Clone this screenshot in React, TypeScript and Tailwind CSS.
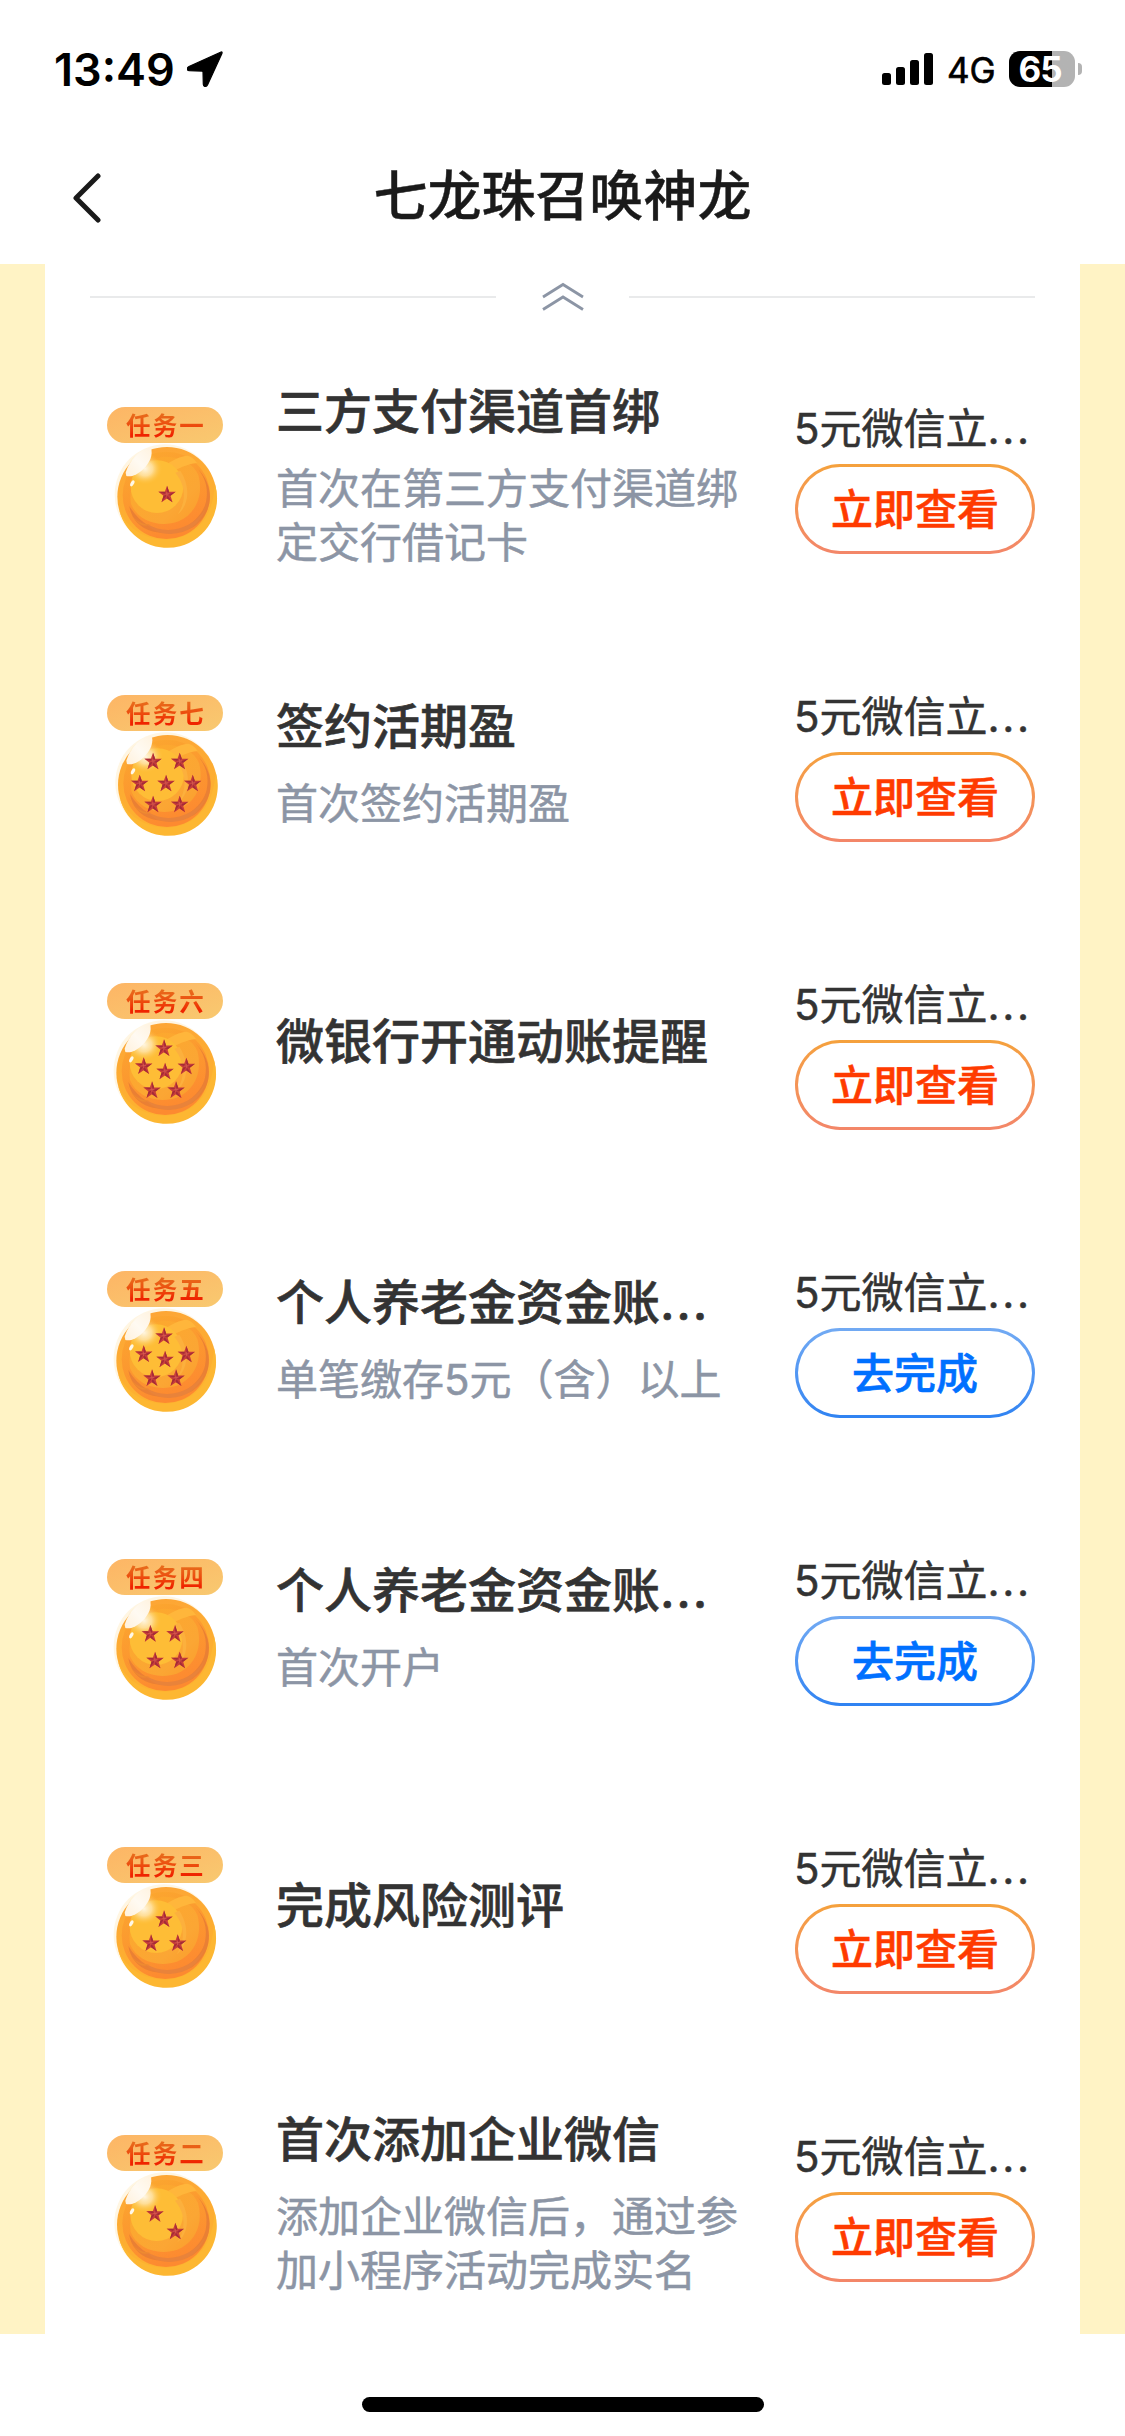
type Point = [number, number];

interface Task {
  badge: string;
  title: string;
  shortened?: boolean;
  desc?: string;
  done: boolean;
  dx: number;
  stars: Point[];
}

const SIX_STARS: Point[] = [[-6, -73], [-67, -19], [61, -18], [-3, -3], [-42, 53], [30, 53]];

const tasks: Task[] = [
  { badge: "任务一", title: "三方支付渠道首绑", desc: "首次在第三方支付渠道绑定交行借记卡", done: true, dx: 0, stars: [[0, -6]] },
  {
    badge: "任务七",
    title: "签约活期盈",
    desc: "首次签约活期盈",
    done: true,
    dx: 2,
    stars: [[-44, -69], [36, -69], [-84, -3], [-5, -3], [75, -3], [-44, 60], [36, 60]],
  },
  { badge: "任务六", title: "微银行开通动账提醒", done: true, dx: -3, stars: SIX_STARS },
  { badge: "任务五", title: "个人养老金资金账", shortened: true, desc: "单笔缴存5元（含）以上", done: false, dx: -3, stars: SIX_STARS },
  { badge: "任务四", title: "个人养老金资金账", shortened: true, desc: "首次开户", done: false, dx: -3, stars: [[-47, -44], [27, -44], [-33, 36], [41, 36]] },
  { badge: "任务三", title: "完成风险测评", done: true, dx: -3, stars: [[-6, -52], [-45, 20], [35, 20]] },
  { badge: "任务二", title: "首次添加企业微信", desc: "添加企业微信后，通过参加小程序活动完成实名", done: true, dx: -1, stars: [[-35, -32], [26, 21]] },
];

const STAR = "M0-27 6.5-8.5 26-8.5 10.5 3.5 16.5 23 0 11.5-16.5 23-10.5 3.5-26-8.5-6.5-8.5Z";
const STAR_SHADE = "M0-27 0 0 6.5-8.5ZM26-8.5 0 0 10.5 3.5ZM16.5 23 0 0 0 11.5ZM-16.5 23 0 0-10.5 3.5ZM-26-8.5 0 0-6.5-8.5Z";

function Ball({ stars, dx, id }: { stars: Point[]; dx: number; id: string }) {
  return (
    <svg viewBox="-180 -161 348 330" className="block h-[110px] w-[116px]">
      <defs>
        <linearGradient id={`${id}-shell`} x1="0" y1="0" x2="0.3" y2="1">
          <stop offset="0" stopColor="#fda436" />
          <stop offset="1" stopColor="#fdb32f" />
        </linearGradient>
        <linearGradient id={`${id}-inner`} x1="0" y1="0" x2="0.4" y2="1">
          <stop offset="0" stopColor="#fbaa2f" />
          <stop offset="1" stopColor="#fd8a30" />
        </linearGradient>
        <linearGradient id={`${id}-core`} x1="0" y1="0" x2="1" y2="1">
          <stop offset="0" stopColor="#fda92c" />
          <stop offset="0.7" stopColor="#fba634" />
          <stop offset="1" stopColor="#fb9c2b" />
        </linearGradient>
        <radialGradient id={`${id}-glow`}>
          <stop offset="0" stopColor="#fff6e2" />
          <stop offset="0.45" stopColor="#ffe9b8" stopOpacity="0.75" />
          <stop offset="1" stopColor="#ffc23e" stopOpacity="0" />
        </radialGradient>
        <linearGradient id={`${id}-shine`} x1="0" y1="1" x2="1" y2="0">
          <stop offset="0" stopColor="#fff1dc" />
          <stop offset="0.5" stopColor="#fffaf2" />
          <stop offset="1" stopColor="#fff3e0" />
        </linearGradient>
      </defs>
      <g transform={`translate(${dx} 0)`}>
        <circle cx="-6" cy="-6" r="151" fill="#fff6e3" />
        <circle r="149" fill={`url(#${id}-shell)`} />
        <path d="M-144 38A149 149 0 1 0 144-38C138 50 100 122 0 129-70 130-125 90-144 38Z" fill="#fdb732" />
        <circle cx="-2" cy="-4" r="131" fill={`url(#${id}-inner)`} />
        <path d="M88-88C150-28 137 52 78 92 10 122-70 102-113 28-108 65-82 92-50 102 30 127 105 70 117 15 125-25 115-60 88-88Z" fill="#ea8034" />
        <path d="M-60 82C0 118 75 97 115 38 98 85 62 110 12 112-22 113-47 100-60 82Z" fill="#e9833a" />
        <path d="M-108 22C-118-42-78-108-10-120 45-120 80-98 94-65 110-5 88 50 35 74-25 95-88 72-108 22Z" fill={`url(#${id}-core)`} />
        <path d="M-12-92C20-110 40-122 62-123 76-120 84-110 90-101 60-98 34-84 14-74Z" fill="#ffb63b" />
        <circle cx="-30" cy="-30" r="79" fill="#febd36" />
        <path d="M40-78C72-30 66 28 32 53 56 18 60-30 25-72Z" fill="#fcb03d" />
        <path d="M-118 36C-105 67-77 85-49 83-70 94-93 83-118 36Z" fill="#ee8a31" />
        <ellipse cx="-66" cy="-84" rx="52" ry="48" fill={`url(#${id}-glow)`} />
        <path d="M-124-72C-113-110-78-146-48-147-42-125-50-105-70-84-88-66-108-58-122-62Z" fill={`url(#${id}-shine)`} />
        <ellipse cx="-104" cy="-40" rx="5" ry="10" transform="rotate(28 -104 -40)" fill="#fff8e8" />
        {stars.map(([x, y]) => (
          <g key={`${x},${y}`} transform={`translate(${x} ${y})`}>
            <path d={STAR} fill="#c83d3a" />
            <path d={STAR_SHADE} fill="#a52b38" />
            <path d="M0-8V5M-7-2H7" stroke="#df6356" strokeWidth="2" />
          </g>
        ))}
      </g>
    </svg>
  );
}

function TaskRow({ task, id }: { task: Task; id: string }) {
  return (
    <li className="flex h-72">
      <div className="ml-[62px] flex w-[116px] shrink-0 flex-col pt-[77.5px]">
        <div className="flex h-9 items-center justify-center rounded-full bg-linear-to-br from-[#fdb565] to-[#f8c970]">
          <span className="bg-linear-to-b from-[#e86a1b] from-25% to-[#ef2400] to-75% bg-clip-text pt-[3px] pl-0.5 text-[24.5px] leading-9 font-bold tracking-[2.2px] text-transparent">
            {task.badge}
          </span>
        </div>
        <Ball stars={task.stars} dx={task.dx} id={id} />
      </div>
      <div className="ml-[53px] flex w-[465px] shrink-0 flex-col justify-center pt-0.5">
        <h2 className="text-[48px] leading-[68px] font-medium whitespace-nowrap text-[#333] [-webkit-text-stroke:0.6px_#333]">
          {task.title}
          {task.shortened && <span className="tracking-[1.8px]">...</span>}
        </h2>
        <p className="mt-4 text-[42px] leading-[54px] text-[#8c95a5] [-webkit-text-stroke:0.5px_#8c95a5]">{task.desc}</p>
      </div>
      <div className="ml-[54px] w-[240px] pt-[73px]">
        <p className="-ml-px h-[54px] text-[42px] leading-[54px] whitespace-nowrap text-[#333] [-webkit-text-stroke:0.5px_#333]">
          5元微信立<span className="tracking-[2.6px]">...</span>
        </p>
        <button
          className={
            task.done
              ? "mt-2 block h-[90px] w-full rounded-full bg-linear-to-b from-[#f5a13c] to-[#f38669] p-[3px]"
              : "mt-2 block h-[90px] w-full rounded-full bg-linear-to-b from-[#72aaf3] to-[#2f83f2] p-[3px]"
          }
        >
          <span
            className={
              task.done
                ? "flex h-full items-center justify-center rounded-full bg-white pt-0.5 text-[42px] leading-none font-medium text-[#ff3b00] [-webkit-text-stroke:0.6px_#ff3b00]"
                : "flex h-full items-center justify-center rounded-full bg-white pt-0.5 text-[42px] leading-none font-medium text-[#0070ff] [-webkit-text-stroke:0.6px_#0070ff]"
            }
          >
            {task.done ? "立即查看" : "去完成"}
          </span>
        </button>
      </div>
    </li>
  );
}

function StatusBar() {
  return (
    <div className="flex h-[138px] items-center justify-between pr-[43px] pl-[54px] text-black">
      <div className="flex items-center">
        <span className="w-[121px] text-[45px] leading-none font-semibold">13:49</span>
        <svg viewBox="0 0 36 36" className="ml-3 h-9 w-9">
          <path d="M33.5 1.2 2 15.5C-.4 16.8-.3 19.5 2.4 19.7L15 20.1C15.7 20.1 16 20.4 16 21L16.3 33.3C16.4 36 19.4 36.3 20.6 33.8L34.7 2.9C35.5 1.3 35 .5 33.5 1.2Z" stroke="#000" strokeWidth="1.2" />
        </svg>
      </div>
      <div className="flex items-center">
        <svg viewBox="0 0 51 32" className="h-8 w-[51px]">
          <rect y="20" width="9" height="12" rx="2.5" />
          <rect x="14" y="14" width="9" height="18" rx="2.5" />
          <rect x="28" y="7" width="9" height="25" rx="2.5" />
          <rect x="42" width="9" height="32" rx="2.5" />
        </svg>
        <span className="ml-[14px] w-[50px] pt-0.5 text-[35px] leading-none font-normal [-webkit-text-stroke:0.6px_#000]">4G</span>
        <div className="ml-3 flex h-9 w-[66px] items-center justify-center rounded-[11px] bg-linear-to-r from-black from-65% to-[#b3b3b3] to-65% pr-1 text-[35px] leading-none font-bold tracking-[-1px] text-white">
          65
        </div>
        <div className="ml-[3px] h-3 w-1 rounded-r-full bg-[#b3b3b3]" />
      </div>
    </div>
  );
}

export default function App() {
  return (
    <main className="flex h-[2436px] w-[1125px] flex-col overflow-hidden bg-white font-['Inter','Noto_Sans_CJK_SC',sans-serif]">
      <StatusBar />
      <header className="grid h-[126px] grid-cols-[120px_1fr_120px] items-start">
        <svg viewBox="0 0 30 50" className="mt-[35px] ml-[72px] h-[50px] w-[30px]" fill="none" stroke="#1a1a1a" strokeWidth="5" strokeLinecap="round" strokeLinejoin="round">
          <path d="M26 3 4 25 26 47" />
        </svg>
        <h1 className="mt-5 text-center text-[54px] leading-[78px] font-medium text-[#1a1a1a] [-webkit-text-stroke:0.4px_#1a1a1a]">七龙珠召唤神龙</h1>
      </header>
      <section className="h-[2070px] shrink-0 bg-[#fff3c5] px-[45px]">
        <div className="h-full overflow-hidden bg-white">
          <div className="flex h-[65px] items-center justify-between px-[45px]">
            <div className="h-0.5 w-[406px] bg-[#e9eaeb]" />
            <svg viewBox="0 0 42 30" className="h-[30px] w-[42px]" fill="none" stroke="#8c95a5" strokeWidth="2.8">
              <path d="M1 15 21 2.5 41 15M1 27.5 21 15 41 27.5" />
            </svg>
            <div className="h-0.5 w-[406px] bg-[#e9eaeb]" />
          </div>
          <ul>
            {tasks.map((task, i) => (
              <TaskRow key={task.badge} task={task} id={`ball${i}`} />
            ))}
          </ul>
        </div>
      </section>
      <footer className="flex grow justify-center pt-[63px]">
        <div className="h-[15px] w-[402px] rounded-full bg-black" />
      </footer>
    </main>
  );
}
